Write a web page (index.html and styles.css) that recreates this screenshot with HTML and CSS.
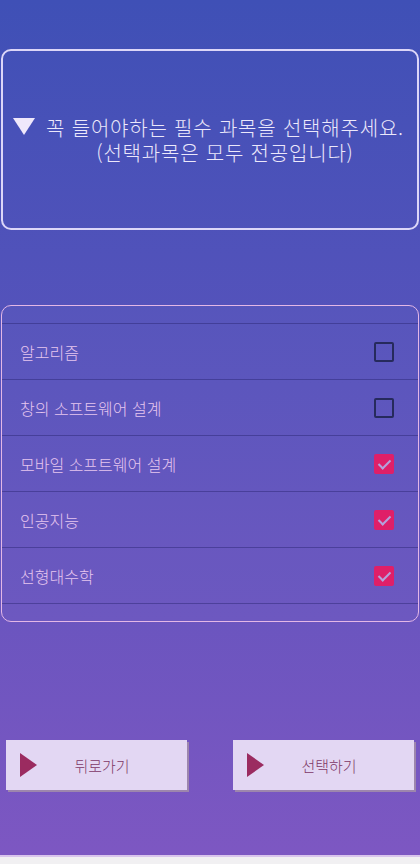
FILE: index.html
```html
<!DOCTYPE html>
<html lang="ko">

<head>
  <meta charset="UTF-8" />
  <meta name="viewport" content="width=device-width, initial-scale=1.0" />
  <title>필수 과목 선택</title>
  <link rel="stylesheet" href="styles.css">
</head>

<body>
  <div class="screen">
    <div class="notice">
      <span class="notice-arrow"></span>
      <p class="notice-text">꼭 들어야하는 필수 과목을 선택해주세요.<br>(선택과목은 모두 전공입니다)</p>
    </div>

    <div class="course-list">
      <div class="course-scroll">
        <div class="course-row"><span></span><span class="check"></span></div>
        <div class="course-row"><span>알고리즘</span><span class="check"></span></div>
        <div class="course-row"><span>창의 소프트웨어 설계</span><span class="check"></span></div>
        <div class="course-row"><span>모바일 소프트웨어 설계</span><span class="check checked"></span></div>
        <div class="course-row"><span>인공지능</span><span class="check checked"></span></div>
        <div class="course-row"><span>선형대수학</span><span class="check checked"></span></div>
        <div class="course-row"><span></span><span class="check"></span></div>
      </div>
    </div>

    <div class="actions">
      <button class="action-btn"><span class="btn-arrow"></span><span class="btn-label">뒤로가기</span></button>
      <button class="action-btn"><span class="btn-arrow"></span><span class="btn-label">선택하기</span></button>
    </div>
  </div>
</body>

</html>
```

FILE: styles.css
```css
body {
  margin: 0;
  background: #f1f0f2;
  font-family: "Noto Sans CJK KR", "Noto Sans", sans-serif;
}

.screen {
  height: 857px;
  background: linear-gradient(180deg, #3f50b6 0%, #5953bc 45%, #7d57c2 100%);
  border-bottom: 2px solid #d9c4ec;
  box-sizing: border-box;
  display: flex;
  flex-direction: column;
  padding-top: 49px;
}

.notice {
  margin: 0 1px;
  height: 181px;
  box-sizing: border-box;
  border: 2.5px solid #dcd6f8;
  border-radius: 10px;
  display: flex;
  align-items: center;
  padding-left: 10px;
}

.notice-arrow {
  width: 0;
  height: 0;
  border-left: 11px solid transparent;
  border-right: 11px solid transparent;
  border-top: 17px solid #efe8fb;
  margin-top: -26px;
}

.notice-text {
  flex: 1;
  margin: 0;
  text-align: center;
  color: #ece8fb;
  font-size: 20px;
  font-weight: 300;
  letter-spacing: 0.8px;
  line-height: 25px;
  padding-right: 2px;
}

.course-list {
  margin: 75px 1px 0;
  height: 317px;
  box-sizing: border-box;
  border: 1.5px solid #e3b7e6;
  border-radius: 10px;
  overflow: hidden;
  background: rgba(255, 255, 255, 0.02);
}

.course-scroll {
  margin-top: -38px;
}

.course-row {
  height: 56px;
  box-sizing: border-box;
  border-bottom: 1px solid rgba(40, 36, 110, 0.45);
  display: flex;
  align-items: center;
  justify-content: space-between;
  padding: 0 24px 0 18px;
  color: #e6c6ef;
  font-size: 16px;
  font-weight: 300;
}

.check {
  width: 20px;
  height: 20px;
  box-sizing: border-box;
  border: 2px solid #262a5c;
  border-radius: 2px;
  position: relative;
}

.check.checked {
  background: #df1f68;
  border-color: #df1f68;
}

.check.checked::after {
  content: "";
  position: absolute;
  left: 5px;
  top: 1px;
  width: 5px;
  height: 10px;
  border-right: 2px solid #b4a2dc;
  border-bottom: 2px solid #b4a2dc;
  transform: rotate(45deg);
}

.actions {
  margin-top: 118px;
  display: flex;
  justify-content: space-between;
  padding: 0 6px;
}

.action-btn {
  width: 181px;
  height: 50px;
  border: none;
  background: #e3d7f3;
  box-shadow: 2px 2px 0 #9d86ad;
  display: flex;
  align-items: center;
  padding: 0 0 0 14px;
  font-family: inherit;
  cursor: pointer;
}

.btn-arrow {
  width: 0;
  height: 0;
  border-top: 12px solid transparent;
  border-bottom: 12px solid transparent;
  border-left: 17px solid #9b2b60;
}

.btn-label {
  flex: 1;
  text-align: center;
  font-size: 15px;
  font-weight: 300;
  color: #7e3766;
  padding-right: 20px;
}
```
